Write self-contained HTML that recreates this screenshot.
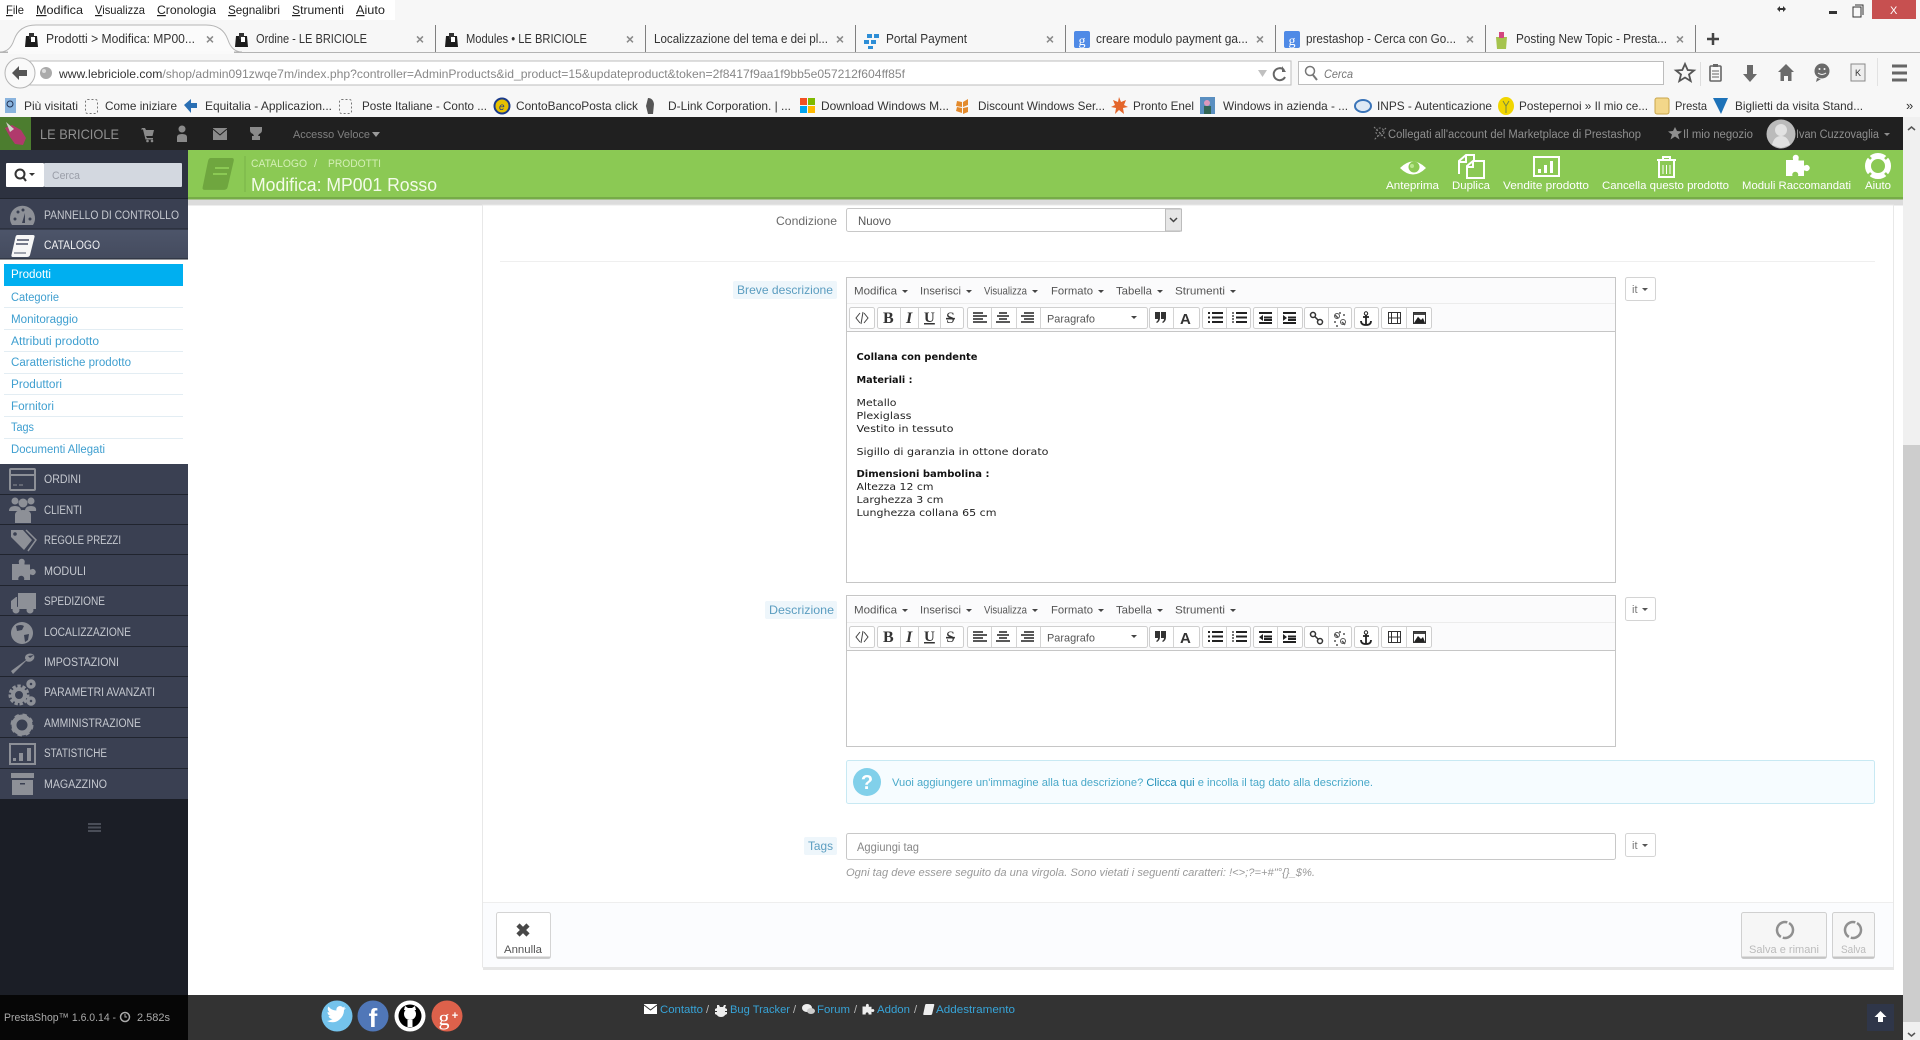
<!DOCTYPE html>
<html lang="it"><head><meta charset="utf-8"><title>Prodotti &gt; Modifica: MP001 Rosso</title>
<style>
html,body{margin:0;padding:0;background:#fff;width:1920px;height:1040px;overflow:hidden}
svg{display:block;font-family:"Liberation Sans",sans-serif}
text{white-space:pre}
.m{font-size:12px;fill:#222}
.tab{font-size:12.5px;fill:#333}
.bm{font-size:12px;fill:#333}
.x{font-size:14px;fill:#8a8a8a;font-weight:bold}
.side{font-size:11.5px;fill:#c6c9d0}
.sub{font-size:11.5px;fill:#3f9fd0}
.tb{font-size:11px;fill:#fff}
.mce{font-size:11px;fill:#555}
.ed{font-family:"DejaVu Sans",sans-serif;font-size:10px;fill:#222}
.edb{font-family:"DejaVu Sans",sans-serif;font-size:10px;fill:#111;font-weight:bold}
.lbl{font-size:12px;fill:#5b9dc0}
.fl{font-size:11px;fill:#37a4d8}
.sl{font-size:11px;fill:#aaa}
.btn{fill:#fff;stroke:#cfcfcf}
.sep{stroke:#d4d4d4;stroke-width:1}
.ic{fill:#8d9097}
.w{fill:#fff}
.d{fill:#333}
</style></head><body>
<svg width="1920" height="1040" viewBox="0 0 1920 1040" xmlns="http://www.w3.org/2000/svg">
<defs>
<linearGradient id="act" x1="0" y1="0" x2="0" y2="1"><stop offset="0" stop-color="#4d556a"/><stop offset="1" stop-color="#444b5e"/></linearGradient>
<path id="puz" d="M8 4a3 3 0 1 1 5.500 0v1.500h5.500v5h1a3 3 0 1 1 0 5h-1v5.500h-6a3 3 0 1 0-5.500 0h-6.500v-16h7z"/>
<path id="bk" d="M6 0h16q2 0 1.500 2l-4.500 18q-.5 2-3 2h-14q-2 0-1.500-2l4-18q.5-2 2-2z"/>
<path id="sub" d="M0 0h6l-3 3z"/>
</defs>
<!-- browser chrome -->
<rect width="1920" height="117" fill="#f7f7f7"/>
<rect width="395" height="20" fill="#fff"/>
<g class="m">
<text x="6" y="14" textLength="18" lengthAdjust="spacingAndGlyphs"><tspan text-decoration="underline">F</tspan>ile</text>
<text x="36" y="14" textLength="47" lengthAdjust="spacingAndGlyphs"><tspan text-decoration="underline">M</tspan>odifica</text>
<text x="95" y="14" textLength="50" lengthAdjust="spacingAndGlyphs"><tspan text-decoration="underline">V</tspan>isualizza</text>
<text x="157" y="14" textLength="59" lengthAdjust="spacingAndGlyphs"><tspan text-decoration="underline">C</tspan>ronologia</text>
<text x="228" y="14" textLength="52" lengthAdjust="spacingAndGlyphs"><tspan text-decoration="underline">S</tspan>egnalibri</text>
<text x="292" y="14" textLength="52" lengthAdjust="spacingAndGlyphs"><tspan text-decoration="underline">S</tspan>trumenti</text>
<text x="356" y="14" textLength="29" lengthAdjust="spacingAndGlyphs"><tspan text-decoration="underline">A</tspan>iuto</text>
</g>
<!-- window controls -->
<rect x="1872" y="0" width="44" height="19" fill="#c75050"/>
<text x="1890" y="14" font-size="11" fill="#fff">X</text>
<rect x="1829" y="11" width="8" height="3" fill="#333"/>
<rect x="1853" y="7" width="8" height="10" fill="none" stroke="#333"/><path d="M1855 5h8v10" fill="none" stroke="#333"/>
<path d="M1777 9l3-3v6zM1786 9l-3-3v6z" fill="#333"/><rect x="1779" y="8" width="5" height="2" fill="#333"/>
<!-- tabs -->
<rect x="0" y="52" width="1920" height="1" fill="#b3b3b3"/>
<path d="M0 52q10 0 14-12 5-15 22-15h170q17 0 22 15 4 12 14 12z" fill="#fbfbfb" stroke="#b5b5b5"/>
<rect x="8" y="51" width="226" height="3" fill="#fafafa"/>
<g stroke="#808080"><path d="M435.500 25v27M645.500 25v27M855.500 25v27M1065.500 25v27M1275.500 25v27M1485.500 25v27M1695.500 25v27"/></g>
<g fill="#1c1c1c"><path d="M26 36h11l1 11h-13z"/><path d="M236 36h11l1 11h-13z"/><path d="M446 36h11l1 11h-13z"/></g>
<g fill="#fff"><rect x="29" y="33" width="5" height="6" fill="#333"/><rect x="239" y="33" width="5" height="6" fill="#333"/><rect x="449" y="33" width="5" height="6" fill="#333"/><rect x="31" y="37" width="4" height="5"/><rect x="241" y="37" width="4" height="5"/><rect x="451" y="37" width="4" height="5"/></g>
<g class="tab">
<text x="46" y="43" textLength="149" lengthAdjust="spacingAndGlyphs">Prodotti &gt; Modifica: MP00...</text>
<text x="256" y="43" textLength="111" lengthAdjust="spacingAndGlyphs">Ordine - LE BRICIOLE</text>
<text x="466" y="43" textLength="121" lengthAdjust="spacingAndGlyphs">Modules • LE BRICIOLE</text>
<text x="654" y="43" textLength="174" lengthAdjust="spacingAndGlyphs">Localizzazione del tema e dei pl...</text>
<text x="886" y="43" textLength="81" lengthAdjust="spacingAndGlyphs">Portal Payment</text>
<text x="1096" y="43" textLength="152" lengthAdjust="spacingAndGlyphs">creare modulo payment ga...</text>
<text x="1306" y="43" textLength="150" lengthAdjust="spacingAndGlyphs">prestashop - Cerca con Go...</text>
<text x="1516" y="43" textLength="151" lengthAdjust="spacingAndGlyphs">Posting New Topic - Presta...</text>
</g>
<g class="x" text-anchor="middle"><text x="210" y="44">×</text><text x="420" y="44">×</text><text x="630" y="44">×</text><text x="840" y="44">×</text><text x="1050" y="44">×</text><text x="1260" y="44">×</text><text x="1470" y="44">×</text><text x="1680" y="44">×</text></g>
<path d="M867 34h5v4h-5zM874 34h5v4h-5zM864 40h5v4h-5zM871 40h5v4h-5zM868 46h5v3h-5z" fill="#2e8ed6"/>
<rect x="1074" y="31" width="16" height="17" rx="2" fill="#4f8ae6"/><text x="1082" y="45" text-anchor="middle" font-size="14" fill="#fff" font-family="Liberation Serif">g</text>
<rect x="1284" y="31" width="16" height="17" rx="2" fill="#4f8ae6"/><text x="1292" y="45" text-anchor="middle" font-size="14" fill="#fff" font-family="Liberation Serif">g</text>
<path d="M1496 37h11l-1 12h-9z" fill="#a5c34d"/><rect x="1499" y="32" width="5" height="6" fill="#d4467e"/>
<path d="M1707 39h12M1713 33v12" stroke="#444" stroke-width="2.500"/>
<!-- nav bar -->
<rect x="30" y="61" width="1261" height="24" fill="#fff" stroke="#bdbdbd"/>
<rect x="1298.500" y="61.500" width="365" height="23" fill="#fff" stroke="#bdbdbd"/>
<circle cx="20" cy="73" r="15" fill="#f9f9f9" stroke="#b5b5b5"/>
<path d="M12 73l7-7v4h8v6h-8v4z" fill="#555"/>
<circle cx="46" cy="73" r="6" fill="#aaa"/><circle cx="44" cy="71" r="2" fill="#ddd"/>
<text x="59" y="78" font-size="12" fill="#888" textLength="846" lengthAdjust="spacingAndGlyphs"><tspan fill="#333">www.lebriciole.com</tspan>/shop/admin091zwqe7m/index.php?controller=AdminProducts&amp;id_product=15&amp;updateproduct&amp;token=2f8417f9aa1f9bb5e057212f604ff85f</text>
<path d="M1258 70h9l-4.500 7z" fill="#c0c0c0"/>
<path d="M1284 70a6 6 0 1 0 1 7" fill="none" stroke="#666" stroke-width="2"/><path d="M1282 66v6h4z" fill="#666"/>
<circle cx="1310" cy="71" r="4.500" fill="none" stroke="#777" stroke-width="1.500"/><path d="M1313 75l4 5" stroke="#777" stroke-width="2"/>
<text x="1324" y="78" font-size="12" font-style="italic" fill="#777" textLength="29" lengthAdjust="spacingAndGlyphs">Cerca</text>
<path d="M1685 64l2.700 6 6.300.5-5 4 1.700 6.500-5.700-3.500-5.700 3.500 1.700-6.500-5-4 6.300-.5z" fill="none" stroke="#555" stroke-width="1.800"/>
<path d="M1700.500 62v24" stroke="#ddd"/>
<rect x="1710" y="66" width="11" height="15" rx="1" fill="none" stroke="#666" stroke-width="1.600"/><rect x="1713" y="64" width="5" height="3" fill="#666"/><path d="M1712 71h7M1712 74h7M1712 77h7" stroke="#666"/>
<path d="M1747 65h6v9h4l-7 8-7-8h4z" fill="#6a6a6a"/>
<path d="M1786 64l8 8h-2.500v9h-3.500v-5h-4v5h-3.500v-9h-2.500z" fill="#6a6a6a"/>
<circle cx="1822" cy="71" r="7.500" fill="#6a6a6a"/><path d="M1817 78l-1 4 5-3z" fill="#6a6a6a"/><path d="M1818 73q4 3 8 0" stroke="#f7f7f7" fill="none"/><circle cx="1819.500" cy="69" r="1" fill="#f7f7f7"/><circle cx="1824.500" cy="69" r="1" fill="#f7f7f7"/>
<rect x="1851" y="64" width="14" height="17" fill="#eee" stroke="#888"/><text x="1855" y="76" font-size="9" fill="#333">K</text>
<path d="M1892 66h15M1892 73h15M1892 80h15" stroke="#666" stroke-width="3"/>
<path d="M1877.500 58v28" stroke="#e2e2e2"/>
<!-- bookmarks -->
<g class="bm">
<text x="24" y="110" textLength="54" lengthAdjust="spacingAndGlyphs">Più visitati</text>
<text x="105" y="110" textLength="72" lengthAdjust="spacingAndGlyphs">Come iniziare</text>
<text x="205" y="110" textLength="127" lengthAdjust="spacingAndGlyphs">Equitalia - Applicazion...</text>
<text x="362" y="110" textLength="125" lengthAdjust="spacingAndGlyphs">Poste Italiane - Conto ...</text>
<text x="516" y="110" textLength="122" lengthAdjust="spacingAndGlyphs">ContoBancoPosta click</text>
<text x="668" y="110" textLength="123" lengthAdjust="spacingAndGlyphs">D-Link Corporation. | ...</text>
<text x="821" y="110" textLength="128" lengthAdjust="spacingAndGlyphs">Download Windows M...</text>
<text x="978" y="110" textLength="127" lengthAdjust="spacingAndGlyphs">Discount Windows Ser...</text>
<text x="1133" y="110" textLength="61" lengthAdjust="spacingAndGlyphs">Pronto Enel</text>
<text x="1223" y="110" textLength="125" lengthAdjust="spacingAndGlyphs">Windows in azienda - ...</text>
<text x="1377" y="110" textLength="115" lengthAdjust="spacingAndGlyphs">INPS - Autenticazione</text>
<text x="1519" y="110" textLength="129" lengthAdjust="spacingAndGlyphs">Postepernoi » Il mio ce...</text>
<text x="1675" y="110" textLength="32" lengthAdjust="spacingAndGlyphs">Presta</text>
<text x="1735" y="110" textLength="128" lengthAdjust="spacingAndGlyphs">Biglietti da visita Stand...</text>
<text x="1906" y="110" font-size="13">»</text>
</g>
<rect x="5" y="98" width="11" height="15" fill="#8ab4de"/><circle cx="10" cy="104" r="3" fill="none" stroke="#235" />
<rect x="85.500" y="99.500" width="12" height="14" rx="2" fill="none" stroke="#777" stroke-dasharray="2 2"/>
<rect x="339.500" y="99.500" width="12" height="14" rx="2" fill="none" stroke="#777" stroke-dasharray="2 2"/>
<path d="M184 105l7-6v4h6v5h-6v5z" fill="#2a6fb3"/>
<circle cx="502" cy="106" r="7.500" fill="#e5c100" stroke="#1a3a8a" stroke-width="2"/><text x="499" y="110" font-size="10" font-style="italic" fill="#1a3a8a">e</text>
<path d="M648 98q5 0 6 6l-1 10h-5l-2-8z" fill="#555"/>
<rect x="800" y="98" width="7" height="7" fill="#f25022"/><rect x="808" y="98" width="7" height="7" fill="#7fba00"/><rect x="800" y="106" width="7" height="7" fill="#00a4ef"/><rect x="808" y="106" width="7" height="7" fill="#ffb900"/>
<path d="M957 101l5 1v5l-6-1zM963 102l5-3v6l-5 2zM957 107l5 1v5l-6-2zM963 108l5-1v5l-5 2z" fill="#e38a2c"/>
<path d="M1119 97l2 5 5-2-2 5 4 2-5 1 1 6-5-4-4 4 1-6-5-1 4-2-2-5 5 2z" fill="#e4652a"/>
<rect x="1200" y="97" width="15" height="17" fill="#5a8fc0"/><circle cx="1207" cy="103" r="3" fill="#d9b"/><rect x="1204" y="106" width="7" height="8" fill="#365"/>
<ellipse cx="1363" cy="106" rx="8" ry="6" fill="#dfe9f4" stroke="#3a74b8" stroke-width="2"/>
<ellipse cx="1506" cy="106" rx="8" ry="9" fill="#f1d600"/><path d="M1503 101l3 5 3-5M1506 106v7" stroke="#784" fill="none"/>
<rect x="1655" y="98" width="14" height="16" rx="2" fill="#f3d78a" stroke="#c9a64b"/>
<path d="M1713 98h15l-7 16z" fill="#1d72b8"/>
<!-- admin top bar -->
<rect y="117" width="1903" height="33" fill="#202020"/>
<rect y="117" width="31" height="33" fill="#4c7d2f"/>
<path d="M5 128l7-3 9 5 5 8-3 7-8-1-5-7z" fill="#b03a6c"/><path d="M6 122l8 7-4 3z" fill="#cfd4c8"/>
<text x="40" y="139" font-size="14" fill="#909090" textLength="79" lengthAdjust="spacingAndGlyphs">LE BRICIOLE</text>
<path d="M142 128h3l1 2h8l-1.500 6h-6.500l1 2h6v1.500h-7.500l-2.500-10h-2z" fill="#8a8a8a"/><circle cx="147.500" cy="141" r="1.300" fill="#8a8a8a"/><circle cx="152" cy="141" r="1.300" fill="#8a8a8a"/>
<circle cx="182" cy="129" r="3.500" fill="#8a8a8a"/><path d="M177 142v-5q0-3 5-3t5 3v5z" fill="#8a8a8a"/>
<rect x="213" y="128" width="14" height="12" fill="#8a8a8a"/><path d="M213 129l7 6 7-6" fill="none" stroke="#202020"/>
<path d="M250 127h12v3q0 3-3 4l-1 2h2v4h-8v-4h2l-1-2q-3-1-3-4z" fill="#8a8a8a"/>
<text x="293" y="138" font-size="11" fill="#808080" textLength="77" lengthAdjust="spacingAndGlyphs">Accesso Veloce</text>
<path d="M372 132h8l-4 5z" fill="#9a9a9a"/>
<circle cx="1380" cy="132" r="4" fill="none" stroke="#888" stroke-dasharray="2 1.500"/><path d="M1374 127l12 12M1386 128l-12 12" stroke="#888" stroke-dasharray="2 1.500"/>
<text x="1388" y="138" font-size="11.500" fill="#8f8f8f" textLength="253" lengthAdjust="spacingAndGlyphs">Collegati all'account del Marketplace di Prestashop</text>
<path d="M1675 127l2 4 5 .5-4 3 1.500 5-4.500-3-4.500 3 1.500-5-4-3 5-.5z" fill="#8f8f8f"/>
<text x="1683" y="138" font-size="11.500" fill="#8f8f8f" textLength="70" lengthAdjust="spacingAndGlyphs">Il mio negozio</text>
<circle cx="1781" cy="134" r="14.500" fill="#bbb"/><circle cx="1781" cy="130" r="6" fill="#e2e2e2"/><path d="M1772 145q2-9 9-9t9 9l-9 3z" fill="#e2e2e2"/>
<text x="1796" y="138" font-size="11.500" fill="#8f8f8f" textLength="83" lengthAdjust="spacingAndGlyphs">Ivan Cuzzovaglia</text>
<use href="#sub" x="1884" y="133" fill="#8f8f8f"/>
<!-- scrollbar -->
<rect x="1903" y="117" width="17" height="923" fill="#f0f0f0"/>
<rect x="1903" y="445" width="17" height="577" fill="#cdcdcd"/>
<path d="M1908 130l3.500-3 3.500 3M1908 1033l3.500 3 3.500-3" fill="none" stroke="#555" stroke-width="1.500"/>
<!-- green header -->
<rect x="188" y="150" width="1715" height="47" fill="#8bc954"/>
<rect x="188" y="197" width="1715" height="2.500" fill="#76ab48"/>
<rect x="188" y="199.500" width="1715" height="6" fill="#dcdcdc"/>
<g fill="#6fa63f"><use href="#bk" transform="translate(202 158) scale(1.350 1.450)"/></g>
<path d="M215 168h14M213 174h14" stroke="#8bc954" stroke-width="2"/>
<path d="M245 156v36" stroke="#79b347"/>
<text x="251" y="167" font-size="11" fill="#d3efb5" textLength="56" lengthAdjust="spacingAndGlyphs">CATALOGO</text>
<text x="314" y="167" font-size="11" fill="#d3efb5">/</text>
<text x="328" y="167" font-size="11" fill="#d3efb5" textLength="53" lengthAdjust="spacingAndGlyphs">PRODOTTI</text>
<text x="251" y="191" font-size="18" fill="#f3fbe9" textLength="186" lengthAdjust="spacingAndGlyphs">Modifica: MP001 Rosso</text>
<g class="tb">
<text x="1386" y="189" textLength="53" lengthAdjust="spacingAndGlyphs">Anteprima</text>
<text x="1452" y="189" textLength="38" lengthAdjust="spacingAndGlyphs">Duplica</text>
<text x="1503" y="189" textLength="86" lengthAdjust="spacingAndGlyphs">Vendite prodotto</text>
<text x="1602" y="189" textLength="127" lengthAdjust="spacingAndGlyphs">Cancella questo prodotto</text>
<text x="1742" y="189" textLength="109" lengthAdjust="spacingAndGlyphs">Moduli Raccomandati</text>
<text x="1865" y="189" textLength="26" lengthAdjust="spacingAndGlyphs">Aiuto</text>
</g>
<!-- toolbar icons -->
<path d="M1400 168q13-13 26 0q-13 13-26 0z" fill="#fff"/><circle cx="1414" cy="167" r="5.500" fill="#8bc954"/><circle cx="1412" cy="166" r="2" fill="#b9e68f"/>
<g fill="none" stroke="#fff" stroke-width="2"><path d="M1459 174v-13l7-6h8v7"/><path d="M1467 178v-12l6-5h11v17z"/><path d="M1466 155v7h-7M1473 161v6h-6"/></g>
<rect x="1534" y="157" width="25" height="19" fill="none" stroke="#fff" stroke-width="2"/><path d="M1538 169h3v4h-3zM1544 165h3v8h-3zM1550 161h3v12h-3z" fill="#fff"/>
<g fill="none" stroke="#fff" stroke-width="2"><path d="M1657 160h19"/><path d="M1663 160v-3h7v3"/><path d="M1659 161v16h15v-16"/></g><path d="M1663 165v9M1666.500 165v9M1670 165v9" stroke="#fff"/>
<use href="#puz" transform="translate(1785 155)" fill="#fff"/>
<circle cx="1878" cy="166" r="10" fill="none" stroke="#fff" stroke-width="6"/><path d="M1871 159l-4-4M1885 159l4-4M1871 173l-4 4M1885 173l4 4" stroke="#8bc954" stroke-width="2.500"/>
<!-- sidebar -->
<rect x="0" y="150" width="188" height="845" fill="#1b1e26"/>
<rect x="0" y="150" width="188" height="649" fill="#3a4052"/>
<rect x="0" y="150" width="188" height="48" fill="#2d3240"/>
<rect x="6" y="163" width="38" height="24" fill="#fff" rx="1"/>
<rect x="44" y="163" width="138" height="24" fill="#d3d8e0" rx="1"/>
<circle cx="20" cy="174" r="4.500" fill="none" stroke="#333" stroke-width="2"/><path d="M23 177l3 4" stroke="#333" stroke-width="2"/>
<use href="#sub" x="29" y="173" fill="#333"/>
<text x="52" y="179" font-size="11" fill="#9a9ea8" textLength="28" lengthAdjust="spacingAndGlyphs">Cerca</text>
<rect x="0" y="229" width="188" height="30" fill="url(#act)"/>
<g stroke="#20242e"><path d="M0 198.500h188M0 229h188M0 259h188M0 494.500h188M0 524.500h188M0 554.500h188M0 585.500h188M0 615.500h188M0 646.500h188M0 676.500h188M0 707.500h188M0 737.500h188M0 768.500h188"/></g>
<rect x="0" y="259.500" width="188" height="204.500" fill="#fff"/>
<rect x="4" y="264" width="179" height="22" fill="#00aff0"/>
<g stroke="#e3edf3"><path d="M4 307.500h179M4 329.500h179M4 351.500h179M4 373.500h179M4 394.500h179M4 416.500h179M4 438.500h179"/></g>
<g class="side">
<text x="44" y="219" textLength="135" lengthAdjust="spacingAndGlyphs">PANNELLO DI CONTROLLO</text>
<text x="44" y="249" textLength="56" lengthAdjust="spacingAndGlyphs" style="fill:#f0f0f2">CATALOGO</text>
<text x="44" y="483" textLength="37" lengthAdjust="spacingAndGlyphs">ORDINI</text>
<text x="44" y="514" textLength="38" lengthAdjust="spacingAndGlyphs">CLIENTI</text>
<text x="44" y="544" textLength="77" lengthAdjust="spacingAndGlyphs">REGOLE PREZZI</text>
<text x="44" y="575" textLength="42" lengthAdjust="spacingAndGlyphs">MODULI</text>
<text x="44" y="605" textLength="61" lengthAdjust="spacingAndGlyphs">SPEDIZIONE</text>
<text x="44" y="636" textLength="87" lengthAdjust="spacingAndGlyphs">LOCALIZZAZIONE</text>
<text x="44" y="666" textLength="75" lengthAdjust="spacingAndGlyphs">IMPOSTAZIONI</text>
<text x="44" y="696" textLength="111" lengthAdjust="spacingAndGlyphs">PARAMETRI AVANZATI</text>
<text x="44" y="727" textLength="97" lengthAdjust="spacingAndGlyphs">AMMINISTRAZIONE</text>
<text x="44" y="757" textLength="63" lengthAdjust="spacingAndGlyphs">STATISTICHE</text>
<text x="44" y="788" textLength="63" lengthAdjust="spacingAndGlyphs">MAGAZZINO</text>
</g>
<g class="sub">
<text x="11" y="278" textLength="40" lengthAdjust="spacingAndGlyphs" style="fill:#fff">Prodotti</text>
<text x="11" y="301" textLength="48" lengthAdjust="spacingAndGlyphs">Categorie</text>
<text x="11" y="323" textLength="67" lengthAdjust="spacingAndGlyphs">Monitoraggio</text>
<text x="11" y="345" textLength="88" lengthAdjust="spacingAndGlyphs">Attributi prodotto</text>
<text x="11" y="366" textLength="120" lengthAdjust="spacingAndGlyphs">Caratteristiche prodotto</text>
<text x="11" y="388" textLength="51" lengthAdjust="spacingAndGlyphs">Produttori</text>
<text x="11" y="410" textLength="43" lengthAdjust="spacingAndGlyphs">Fornitori</text>
<text x="11" y="431" textLength="23" lengthAdjust="spacingAndGlyphs">Tags</text>
<text x="11" y="453" textLength="94" lengthAdjust="spacingAndGlyphs">Documenti Allegati</text>
</g>
<!-- sidebar icons -->
<path d="M12 225a12.500 12.500 0 1 1 21 0z" class="ic"/><circle cx="15" cy="219" r="1.500" fill="#3a4052"/><circle cx="18" cy="212" r="1.500" fill="#3a4052"/><circle cx="23" cy="210" r="1.500" fill="#3a4052"/><circle cx="30" cy="219" r="1.500" fill="#3a4052"/><path d="M25 213l-3 10h3z" fill="#3a4052"/>
<use href="#bk" transform="translate(11 235)" fill="#f6f6f6"/><path d="M17 240h12M16 244h12" stroke="#4a5166" stroke-width="1.500"/><path d="M14 253h12" stroke="#4a5166"/>
<rect x="10" y="469" width="25" height="21" rx="1" fill="none" stroke="#8d9097" stroke-width="2"/><path d="M10 475h25" stroke="#8d9097" stroke-width="2"/><path d="M13 485h4M19 485h4" stroke="#8d9097"/>
<g class="ic"><circle cx="15" cy="501" r="3.500"/><circle cx="31" cy="501" r="3.500"/><circle cx="23" cy="503" r="4.500"/><path d="M9 511q0-5 6-5t6 5zM25 511q0-5 6-5t5 5z"/><path d="M15 523v-8q0-5 8-5t8 5v8z"/></g>
<g class="ic"><path d="M11 530h12l9 10-8 10-13-13z"/><path d="M26 530l10 10-8 11" fill="none" stroke="#8d9097" stroke-width="1.500"/></g><circle cx="15" cy="534" r="1.800" fill="#3a4052"/>
<use href="#puz" transform="translate(11 559)" class="ic"/>
<g class="ic"><path d="M18 593h18v16h-18zM11 609v-8l5-4h1v12z"/><circle cx="16" cy="610" r="3.500"/><circle cx="30" cy="610" r="3.500"/></g>
<circle cx="22" cy="633" r="11" class="ic"/><path d="M16 626q5-2 8 0l-2 4-5 1zM24 635l5-1-1 6-3 2z" fill="#3a4052"/>
<path d="M34 655q-4-3-8 0-2 3 0 5l-15 11 2 3 13-13q4 2 7-1 2-2 1-5l-4 3-2-2z" class="ic"/>
<g class="ic"><circle cx="19" cy="695" r="8" fill="none" stroke="#8d9097" stroke-width="5" stroke-dasharray="3 1.500"/><circle cx="19" cy="695" r="6" fill="none" stroke="#8d9097" stroke-width="4"/><circle cx="31" cy="684" r="3" fill="none" stroke="#8d9097" stroke-width="3.500"/><circle cx="31" cy="701" r="3" fill="none" stroke="#8d9097" stroke-width="3.500"/></g>
<circle cx="22" cy="725" r="8" fill="none" stroke="#8d9097" stroke-width="5"/><circle cx="22" cy="725" r="9.500" fill="none" stroke="#8d9097" stroke-width="4" stroke-dasharray="4 3.500"/>
<rect x="10" y="744" width="25" height="20" fill="none" stroke="#8d9097" stroke-width="2"/><path d="M13 758h3v3h-3zM19 753h4v8h-4zM27 748h4v13h-4z" class="ic"/>
<g class="ic"><rect x="11" y="773" width="23" height="5"/><rect x="12" y="780" width="21" height="15"/></g><rect x="20" y="783" width="5" height="1.500" fill="#3a4052"/>
<path d="M88 824h13M88 827.500h13M88 831h13" stroke="#4a4e58" stroke-width="2"/>
<!-- panel -->
<rect x="482.500" y="205" width="1411" height="762" fill="#fff" stroke="#e8e8e8"/>
<rect x="500" y="261" width="1375" height="1" fill="#efefef"/>
<rect x="483" y="902" width="1410" height="65" fill="#fbfcfe"/><rect x="483" y="902" width="1410" height="1" fill="#eee"/>
<rect x="483" y="967" width="1411" height="3" fill="#e6e6e6"/>
<!-- condition -->
<text x="776" y="225" font-size="12" fill="#6a6a6a" textLength="61" lengthAdjust="spacingAndGlyphs">Condizione</text>
<rect x="846.500" y="208.500" width="335" height="23" rx="2" fill="#fff" stroke="#c8c8c8"/>
<text x="858" y="225" font-size="11.500" fill="#555" textLength="33" lengthAdjust="spacingAndGlyphs">Nuovo</text>
<rect x="1165.500" y="209" width="16" height="22" fill="#e6e6e6" stroke="#bcbcbc"/><path d="M1170 218l3.500 3.500 3.500-3.500" fill="none" stroke="#444" stroke-width="1.500"/>
<!-- editor 1 -->
<rect x="733" y="281" width="104" height="18" rx="2" fill="#eef6fb"/>
<text x="737" y="294" class="lbl" textLength="96" lengthAdjust="spacingAndGlyphs">Breve descrizione</text>
<rect x="846.500" y="277.500" width="769" height="305" fill="#fff" stroke="#c6c6c6"/>
<g id="e1">
<rect x="847" y="278" width="768" height="53" fill="#fbfbfc"/>
<path d="M847 303.500h768" stroke="#ececec"/><path d="M847 331.500h768" stroke="#c6c6c6"/>
<g class="mce">
<text x="854" y="294.500" textLength="43" lengthAdjust="spacingAndGlyphs">Modifica</text>
<text x="920" y="294.500" textLength="41" lengthAdjust="spacingAndGlyphs">Inserisci</text>
<text x="984" y="294.500" textLength="43" lengthAdjust="spacingAndGlyphs">Visualizza</text>
<text x="1051" y="294.500" textLength="42" lengthAdjust="spacingAndGlyphs">Formato</text>
<text x="1116" y="294.500" textLength="36" lengthAdjust="spacingAndGlyphs">Tabella</text>
<text x="1175" y="294.500" textLength="50" lengthAdjust="spacingAndGlyphs">Strumenti</text>
</g>
<g fill="#444"><use href="#sub" x="902" y="290"/><use href="#sub" x="966" y="290"/><use href="#sub" x="1032" y="290"/><use href="#sub" x="1098" y="290"/><use href="#sub" x="1157" y="290"/><use href="#sub" x="1230" y="290"/></g>
<g class="btn"><rect x="849.500" y="307.500" width="25" height="21" rx="2"/><rect x="877.500" y="307.500" width="86" height="21" rx="2"/><rect x="967.500" y="307.500" width="180" height="21" rx="2"/><rect x="1149.500" y="307.500" width="50" height="21" rx="2"/><rect x="1202.500" y="307.500" width="48" height="21" rx="2"/><rect x="1253.500" y="307.500" width="49" height="21" rx="2"/><rect x="1304.500" y="307.500" width="47" height="21" rx="2"/><rect x="1354.500" y="307.500" width="24" height="21" rx="2"/><rect x="1381.500" y="307.500" width="50" height="21" rx="2"/></g>
<path class="sep" d="M900.500 308v20M918.500 308v20M940.500 308v20M991.500 308v20M1016.500 308v20M1040.500 308v20M1173.500 308v20M1226.500 308v20M1277.500 308v20M1328.500 308v20M1406.500 308v20"/>
<path d="M860 313l-4 5 4 5M864 313l4 5-4 5M863 312l-2 12" fill="none" stroke="#444"/>
<text x="883" y="323" font-family="Liberation Serif" font-weight="bold" font-size="16" fill="#333">B</text>
<text x="906" y="323" font-family="Liberation Serif" font-style="italic" font-weight="bold" font-size="16" fill="#333">I</text>
<text x="924" y="322" font-family="Liberation Serif" font-weight="bold" font-size="15" fill="#333" text-decoration="underline">U</text>
<text x="946" y="323" font-family="Liberation Serif" font-size="16" fill="#333" text-decoration="line-through">S</text>
<path d="M973 313h10M973 316h14M973 319h10M973 322h14" stroke="#222" stroke-width="1.600"/>
<path d="M999 313h8M997 316h12M999 319h8M996 322h14" stroke="#222" stroke-width="1.600"/>
<path d="M1024 313h10M1021 316h13M1024 319h10M1021 322h13" stroke="#222" stroke-width="1.600"/>
<text x="1047" y="322.500" class="mce" textLength="48" lengthAdjust="spacingAndGlyphs">Paragrafo</text><use href="#sub" x="1131" y="316" fill="#444"/>
<path d="M1155 312h5v6q0 3-3 5l-1-1q2-1 2-3h-3zM1161 312h5v6q0 3-3 5l-1-1q2-1 2-3h-3z" fill="#333"/>
<text x="1180" y="324" font-weight="bold" font-size="15" fill="#333">A</text>
<path d="M1212 313h11M1212 317.500h11M1212 322h11" stroke="#222" stroke-width="2"/><path d="M1208 313h2M1208 317.500h2M1208 322h2" stroke="#222" stroke-width="2"/>
<path d="M1236 313h11M1236 317.500h11M1236 322h11" stroke="#222" stroke-width="2"/><path d="M1233 312v12" stroke="#444" stroke-width="1.500" stroke-dasharray="2 1"/>
<path d="M1259 313h13M1264 317.500h8M1264 320h8M1259 323h13" stroke="#222" stroke-width="2"/><path d="M1263 315v6l-4-3z" fill="#222"/>
<path d="M1283 313h13M1288 317.500h8M1288 320h8M1283 323h13" stroke="#222" stroke-width="2"/><path d="M1283 315v6l4-3z" fill="#222"/>
<circle cx="1313" cy="315" r="2.500" fill="none" stroke="#333" stroke-width="1.500"/><circle cx="1320" cy="322" r="2.500" fill="none" stroke="#333" stroke-width="1.500"/><path d="M1315 317l3 3" stroke="#333" stroke-width="1.500"/>
<path d="M1335 315l3 3M1342 322l3 3M1340 312v2M1345 315h-2M1334 322h2M1337 325v2" stroke="#555" stroke-width="1.500"/><circle cx="1337" cy="316" r="2.500" fill="none" stroke="#555"/><circle cx="1343" cy="322" r="2.500" fill="none" stroke="#555"/>
<path d="M1366 315v10M1361 321q0 4 5 4t5-4M1363 317h6" fill="none" stroke="#222" stroke-width="1.800"/><circle cx="1366" cy="313.500" r="1.700" fill="none" stroke="#222"/>
<rect x="1388.500" y="312.500" width="12" height="11" fill="none" stroke="#333"/><path d="M1391.500 313v10M1397.500 313v10M1389 318h11" stroke="#333"/>
<rect x="1413.500" y="312.500" width="12" height="11" fill="none" stroke="#333"/><path d="M1414 323l4-6 3 3 2-2 2 5z" fill="#222"/><rect x="1414" y="313" width="11" height="2" fill="#444"/>
</g>
<text x="856.500" y="360" class="edb" textLength="121" lengthAdjust="spacingAndGlyphs">Collana con pendente</text>
<text x="856.500" y="383" class="edb" textLength="56" lengthAdjust="spacingAndGlyphs">Materiali :</text>
<text x="856.500" y="406" class="ed" textLength="40" lengthAdjust="spacingAndGlyphs">Metallo</text>
<text x="856.500" y="419" class="ed" textLength="55" lengthAdjust="spacingAndGlyphs">Plexiglass</text>
<text x="856.500" y="432" class="ed" textLength="97" lengthAdjust="spacingAndGlyphs">Vestito in tessuto</text>
<text x="856.500" y="455" class="ed" textLength="192" lengthAdjust="spacingAndGlyphs">Sigillo di garanzia in ottone dorato</text>
<text x="856.500" y="477" class="edb" textLength="133" lengthAdjust="spacingAndGlyphs">Dimensioni bambolina :</text>
<text x="856.500" y="490" class="ed" textLength="77" lengthAdjust="spacingAndGlyphs">Altezza 12 cm</text>
<text x="856.500" y="503" class="ed" textLength="87" lengthAdjust="spacingAndGlyphs">Larghezza 3 cm</text>
<text x="856.500" y="516" class="ed" textLength="140" lengthAdjust="spacingAndGlyphs">Lunghezza collana 65 cm</text>
<rect x="1625.500" y="277.500" width="30" height="23" rx="2" fill="#fff" stroke="#d4d4d4"/>
<text x="1632" y="293" font-size="11" fill="#777">it</text><use href="#sub" x="1642" y="288" fill="#555"/>
<!-- editor 2 -->
<rect x="765" y="601" width="72" height="18" rx="2" fill="#eef6fb"/>
<text x="769" y="614" class="lbl" textLength="65" lengthAdjust="spacingAndGlyphs">Descrizione</text>
<rect x="846.500" y="595.500" width="769" height="151" fill="#fff" stroke="#c6c6c6"/>
<use href="#e1" y="319"/>
<rect x="1625.500" y="597.500" width="30" height="23" rx="2" fill="#fff" stroke="#d4d4d4"/>
<text x="1632" y="613" font-size="11" fill="#777">it</text><use href="#sub" x="1642" y="608" fill="#555"/>
<!-- info -->
<rect x="846.500" y="760.500" width="1028" height="43" rx="2" fill="#f6fcff" stroke="#c8e9f3"/>
<circle cx="867" cy="782" r="14" fill="#81d0ea"/>
<text x="867" y="789" text-anchor="middle" font-size="20" font-weight="bold" fill="#fff">?</text>
<text x="892" y="786" font-size="11" fill="#4aa9c9" textLength="481" lengthAdjust="spacingAndGlyphs">Vuoi aggiungere un'immagine alla tua descrizione? <tspan fill="#1f8fb8">Clicca qui</tspan> e incolla il tag dato alla descrizione.</text>
<!-- tags -->
<rect x="804" y="837" width="33" height="18" rx="2" fill="#eef6fb"/>
<text x="808" y="850" class="lbl" textLength="25" lengthAdjust="spacingAndGlyphs">Tags</text>
<rect x="846.500" y="833.500" width="769" height="26" rx="2" fill="#fff" stroke="#c8c8c8"/>
<text x="857" y="851" font-size="11.500" fill="#888" textLength="62" lengthAdjust="spacingAndGlyphs">Aggiungi tag</text>
<text x="846" y="876" font-size="11" font-style="italic" fill="#999" textLength="469" lengthAdjust="spacingAndGlyphs">Ogni tag deve essere seguito da una virgola. Sono vietati i seguenti caratteri: !&lt;&gt;;?=+#"°{}_$%.</text>
<rect x="1625.500" y="833.500" width="30" height="23" rx="2" fill="#fff" stroke="#d4d4d4"/>
<text x="1632" y="849" font-size="11" fill="#777">it</text><use href="#sub" x="1642" y="844" fill="#555"/>
<!-- footer buttons -->
<rect x="496.500" y="912.500" width="54" height="46" rx="2" fill="#fff" stroke="#d4d4d4"/><path d="M497 957.500h53" stroke="#c8c8c8" stroke-width="2"/>
<path d="M518 925l5 5 5-5M518 935l5-5 5 5" fill="none" stroke="#484848" stroke-width="4.500"/>
<text x="504" y="953" font-size="11" fill="#555" textLength="38" lengthAdjust="spacingAndGlyphs">Annulla</text>
<rect x="1741.500" y="912.500" width="85" height="46" rx="2" fill="#f6f6f6" stroke="#d0d0d0"/><path d="M1742 957.500h84" stroke="#c4c4c4" stroke-width="2"/>
<rect x="1832.500" y="912.500" width="42" height="46" rx="2" fill="#f6f6f6" stroke="#d0d0d0"/><path d="M1833 957.500h41" stroke="#c4c4c4" stroke-width="2"/>
<circle cx="1785" cy="930" r="8" fill="none" stroke="#909090" stroke-width="2.500" stroke-dasharray="23 2.100" transform="rotate(-60 1785 930)"/>
<circle cx="1853" cy="930" r="8" fill="none" stroke="#909090" stroke-width="2.500" stroke-dasharray="23 2.100" transform="rotate(-60 1853 930)"/>
<text x="1749" y="953" font-size="11" fill="#bbb" textLength="70" lengthAdjust="spacingAndGlyphs">Salva e rimani</text>
<text x="1841" y="953" font-size="11" fill="#bbb" textLength="25" lengthAdjust="spacingAndGlyphs">Salva</text>
<!-- page footer -->
<rect x="188" y="995" width="1715" height="45" fill="#333"/>
<rect x="0" y="995" width="188" height="45" fill="#060606"/>
<text x="4" y="1021" class="sl" textLength="112" lengthAdjust="spacingAndGlyphs">PrestaShop™ 1.6.0.14 -</text>
<circle cx="125" cy="1017" r="4.500" fill="none" stroke="#aaa" stroke-width="1.500"/><path d="M125 1014v3h2" stroke="#aaa" fill="none"/>
<text x="137" y="1021" class="sl" textLength="33" lengthAdjust="spacingAndGlyphs">2.582s</text>
<circle cx="337" cy="1016" r="15.500" fill="#74c3ec"/>
<path d="M327 1021q7 3 12-1 5-4 5-10l2-2-2 .5 1-2-2 1q-3-3-6 0-1 2-.5 3-5 0-8-4-2 3 1 6l-2-.5q0 3 3 4h-2q1 3 4 3-3 2-6 2z" fill="#fff"/>
<circle cx="373" cy="1016" r="15.500" fill="#5077b8"/>
<text x="373" y="1027" text-anchor="middle" font-size="26" font-weight="bold" fill="#fff">f</text>
<circle cx="410" cy="1016" r="15.500" fill="#fff"/><circle cx="410" cy="1016" r="11.500" fill="#000"/><circle cx="410" cy="1014" r="6" fill="#fff"/><path d="M404 1010l1-4 3 2h4l3-2 1 4z" fill="#fff"/><rect x="407.500" y="1020" width="5" height="7" fill="#fff"/>
<circle cx="447" cy="1016" r="15.500" fill="#dd614b"/>
<text x="444" y="1025" text-anchor="middle" font-size="22" font-family="Liberation Serif" fill="#fff">g</text><text x="455" y="1019" text-anchor="middle" font-size="11" font-weight="bold" fill="#fff">+</text>
<rect x="644" y="1004" width="13" height="10" fill="#fff"/><path d="M644 1005l6.500 5 6.500-5" fill="none" stroke="#333"/>
<text x="660" y="1013" class="fl" textLength="43" lengthAdjust="spacingAndGlyphs">Contatto</text><text x="706" y="1013" font-size="11" fill="#bbb">/</text>
<path d="M717 1005h2l1 2h3l1-2h2l-1 3 2 1v2h-2v1h2v2l-2 1q-1 2-4 2t-4-2l-2-1v-2h2v-1h-2v-2l2-1z" fill="#eee"/>
<text x="730" y="1013" class="fl" textLength="60" lengthAdjust="spacingAndGlyphs">Bug Tracker</text><text x="793" y="1013" font-size="11" fill="#bbb">/</text>
<ellipse cx="807" cy="1008" rx="5" ry="4" fill="#eee"/><ellipse cx="811" cy="1011" rx="4" ry="3" fill="#ccc"/>
<text x="817" y="1013" class="fl" textLength="33" lengthAdjust="spacingAndGlyphs">Forum</text><text x="854" y="1013" font-size="11" fill="#bbb">/</text>
<use href="#puz" transform="translate(862 1004) scale(.5)" fill="#eee"/>
<text x="877" y="1013" class="fl" textLength="33" lengthAdjust="spacingAndGlyphs">Addon</text><text x="914" y="1013" font-size="11" fill="#bbb">/</text>
<use href="#bk" transform="translate(923 1004) scale(.48 .5)" fill="#eee"/>
<text x="936" y="1013" class="fl" textLength="79" lengthAdjust="spacingAndGlyphs">Addestramento</text>
<rect x="1867" y="1004" width="27" height="27" fill="#2f3649"/>
<path d="M1880.500 1011l6 6h-3.500v5h-5v-5h-3.500z" fill="#fff"/>
</svg>
</body></html>
